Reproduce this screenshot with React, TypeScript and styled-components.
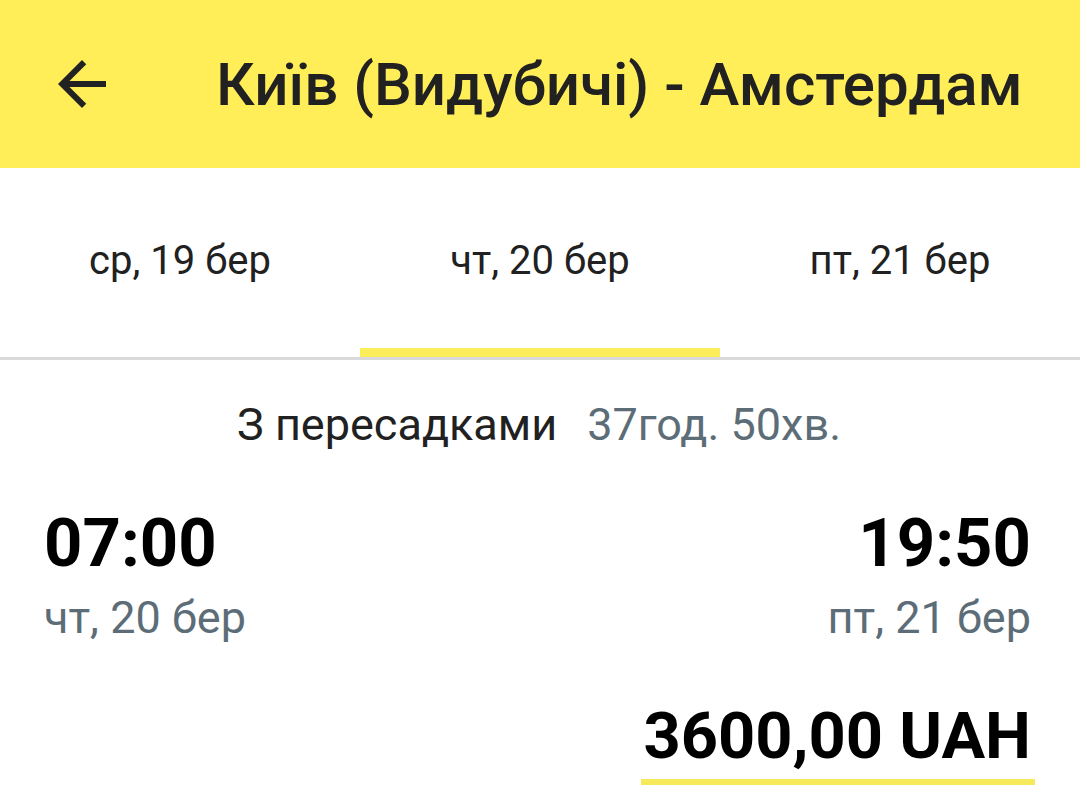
import React from "react";
import styled, { createGlobalStyle } from "styled-components";

const Global = createGlobalStyle`
  html, body { margin: 0; padding: 0; background: #fff; }
  body { font-family: Roboto, "Noto Sans", sans-serif; width: 1080px; height: 801px; overflow: hidden; }
`;

const Page = styled.div`
  width: 1080px;
  height: 801px;
  background: #fff;
  display: flex;
  flex-direction: column;
`;

const Header = styled.header`
  height: 168px;
  background: #ffee58;
  display: flex;
  align-items: center;
  padding-left: 46px;
  box-sizing: border-box;
`;

const BackIcon = styled.svg`
  width: 72px;
  height: 72px;
  flex: none;
  fill: #222;
`;

const Title = styled.h1`
  margin: 0 0 0 98px;
  font-family: Roboto, sans-serif;
  font-weight: 500;
  font-size: 60px;
  color: #212121;
  letter-spacing: 0;
  white-space: nowrap;
`;

const Tabs = styled.nav`
  height: 192px;
  display: grid;
  grid-template-columns: repeat(3, 1fr);
  border-bottom: 3px solid #d9d9d9;
  box-sizing: border-box;
`;

const Tab = styled.div<{ $active?: boolean }>`
  position: relative;
  display: flex;
  align-items: center;
  justify-content: center;
  font-size: 40px;
  color: #212121;
  padding-bottom: 4px;
  &::after {
    content: "";
    display: ${(p) => (p.$active ? "block" : "none")};
    position: absolute;
    left: 0;
    right: 0;
    bottom: 0;
    height: 9px;
    background: #fcee5a;
  }
`;

const Summary = styled.div`
  display: flex;
  justify-content: center;
  gap: 30px;
  font-size: 45px;
  line-height: 56px;
  margin-top: 37px;
  color: #212121;
  padding-right: 2px;
`;

const Muted = styled.span`
  color: #5d6d78;
`;

const Times = styled.div`
  display: flex;
  justify-content: space-between;
  padding: 0 49px 0 44px;
  margin-top: 50px;
`;

const Point = styled.div<{ $right?: boolean }>`
  display: flex;
  flex-direction: column;
  align-items: ${(p) => (p.$right ? "flex-end" : "flex-start")};
`;

const Time = styled.div`
  font-weight: 700;
  font-size: 67px;
  color: #000;
  line-height: 80px;
`;

const DateText = styled.div`
  font-size: 45px;
  color: #5d6d78;
  line-height: 56px;
  margin-top: 7px;
`;

const PriceRow = styled.div`
  display: flex;
  justify-content: flex-end;
  padding-right: 45px;
  margin-top: 52px;
`;

const Price = styled.div`
  font-weight: 700;
  font-size: 65px;
  line-height: 76px;
  color: #000;
  padding: 0 4px 5px 2px;
  border-bottom: 6px solid #f6ea5c;
`;

export default function App() {
  return (
    <Page>
      <Global />
      <Header>
        <BackIcon viewBox="0 0 24 24" aria-label="Назад">
          <path d="M20 11H7.83l5.59-5.59L12 4l-8 8 8 8 1.41-1.41L7.83 13H20v-2z" />
        </BackIcon>
        <Title>Київ (Видубичі) - Амстердам</Title>
      </Header>
      <Tabs>
        <Tab>ср, 19 бер</Tab>
        <Tab $active>чт, 20 бер</Tab>
        <Tab>пт, 21 бер</Tab>
      </Tabs>
      <Summary>
        <span>З пересадками</span>
        <Muted>37год. 50хв.</Muted>
      </Summary>
      <Times>
        <Point>
          <Time>07:00</Time>
          <DateText>чт, 20 бер</DateText>
        </Point>
        <Point $right>
          <Time>19:50</Time>
          <DateText>пт, 21 бер</DateText>
        </Point>
      </Times>
      <PriceRow>
        <Price>3600,00 UAH</Price>
      </PriceRow>
    </Page>
  );
}
